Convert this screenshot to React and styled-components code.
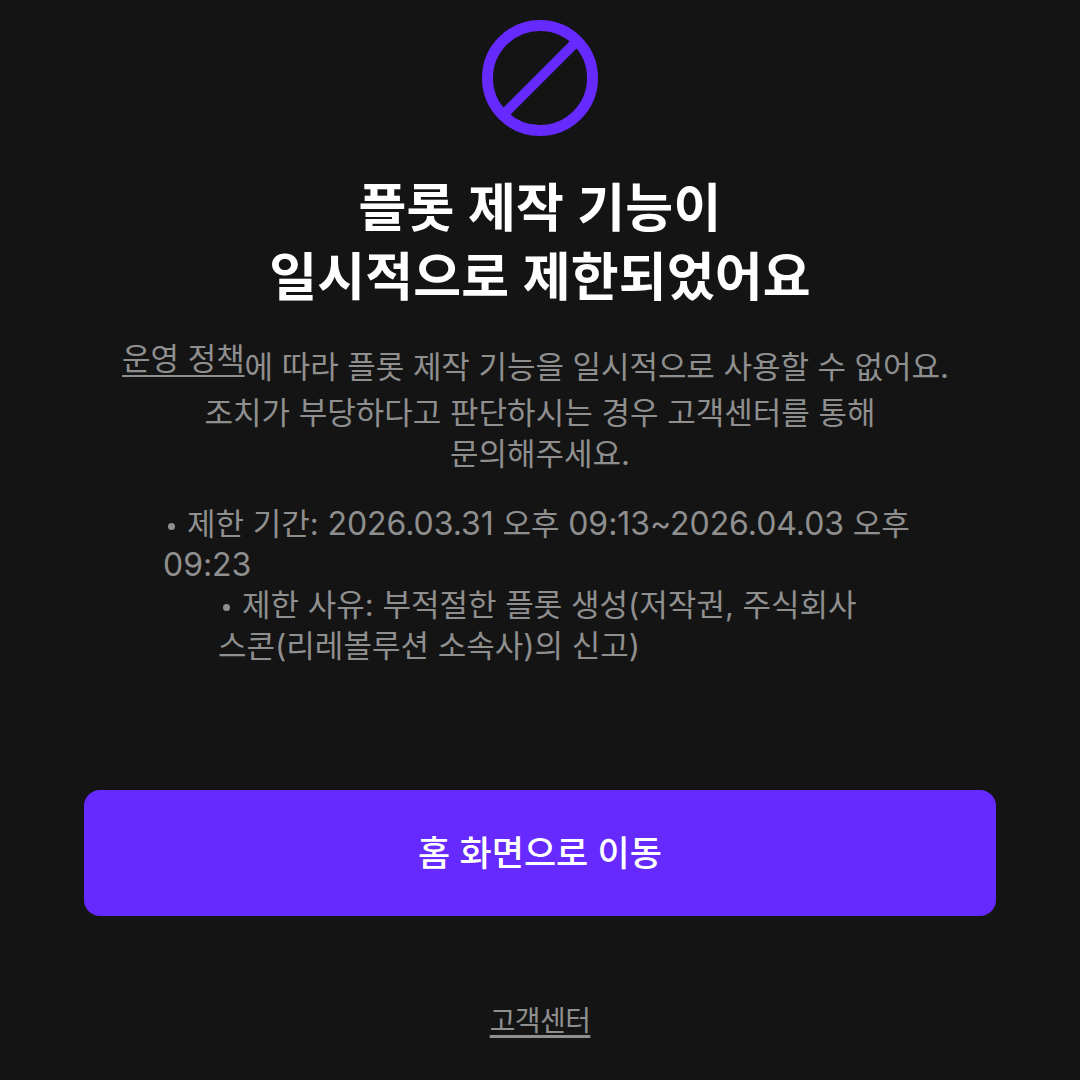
import React from 'react';
import styled, { createGlobalStyle } from 'styled-components';

const GlobalStyle = createGlobalStyle`
  html, body { margin: 0; padding: 0; background: #141414; }
  body { font-family: Inter, "Noto Sans CJK KR", sans-serif; }
`;

const Screen = styled.div`
  width: 1080px;
  height: 1080px;
  overflow: hidden;
  box-sizing: border-box;
  padding-top: 20px;
  background: #141414;
  display: flex;
  flex-direction: column;
  align-items: center;
`;

const Icon = styled.svg`
  width: 116px;
  height: 116px;
  display: block;
`;

const Title = styled.h1`
  margin: 38px 0 0;
  font-size: 52px;
  line-height: 69px;
  font-weight: 600;
  letter-spacing: 0.2px;
  color: #fff;
  text-align: center;
`;

const Description = styled.p`
  margin: 26px 0 0;
  width: 840px;
  font-size: 31px;
  line-height: 41px;
  color: #8f8f8f;
  text-align: center;
`;

const FirstLine = styled.span`
  display: block;
  margin-bottom: 5px;
  padding-right: 9px;
  letter-spacing: -0.06px;
`;

const PolicyLink = styled.a`
  color: #8f8f8f;
  vertical-align: 8px;
  text-decoration: underline;
  text-underline-offset: 5px;
  text-decoration-thickness: 2px;
`;

const Limits = styled.ul`
  margin: 30px 0 0;
  padding: 0;
  list-style: none;
  display: flex;
  flex-direction: column;
  align-items: center;
`;

const Limit = styled.li`
  width: ${props => props.width}px;
  font-size: 31px;
  line-height: 40.5px;
  color: #8f8f8f;
`;

const Bullet = styled.span`
  display: inline-block;
  width: 7px;
  height: 7px;
  margin: 0 12px 0 5px;
  border-radius: 50%;
  background: #8f8f8f;
  vertical-align: middle;
`;

const Numbers = styled.span`
  font-size: 32px;
  letter-spacing: -0.05px;
`;

const HomeButton = styled.button`
  margin-top: 124px;
  width: 912px;
  height: 126px;
  flex: none;
  border: 0;
  padding: 0 0 5px;
  border-radius: 16px;
  background: #662aff;
  color: #fff;
  font-family: inherit;
  font-size: 35px;
  font-weight: 500;
`;

const SupportLink = styled.a`
  margin-top: 85px;
  font-size: 28px;
  line-height: 40px;
  color: #8f8f8f;
  text-decoration: underline;
  text-underline-offset: 4px;
  text-decoration-thickness: 3px;
  letter-spacing: -0.6px;
`;

const App = () => (
  <Screen>
    <GlobalStyle />
    <Icon viewBox="0 0 116 116" fill="none" stroke="#662aff">
      <circle cx="58" cy="58" r="52.5" strokeWidth="11" />
      <path d="M95 21 21 95" strokeWidth="10" />
    </Icon>
    <Title>
      플롯 제작 기능이
      <br />
      일시적으로 제한되었어요
    </Title>
    <Description>
      <FirstLine>
        <PolicyLink>운영 정책</PolicyLink>에 따라 플롯 제작 기능을 일시적으로 사용할 수 없어요.
      </FirstLine>
      조치가 부당하다고 판단하시는 경우 고객센터를 통해
      <br />
      문의해주세요.
    </Description>
    <Limits>
      <Limit width={754}>
        <Bullet />제한 기간: <Numbers>2026.03.31</Numbers> 오후 <Numbers>09:13~2026.04.03</Numbers> 오후 <Numbers>09:23</Numbers>
      </Limit>
      <Limit width={644}>
        <Bullet />제한 사유: 부적절한 플롯 생성(저작권, 주식회사 스콘(리레볼루션 소속사)의 신고)
      </Limit>
    </Limits>
    <HomeButton>홈 화면으로 이동</HomeButton>
    <SupportLink>고객센터</SupportLink>
  </Screen>
);

export default App;
